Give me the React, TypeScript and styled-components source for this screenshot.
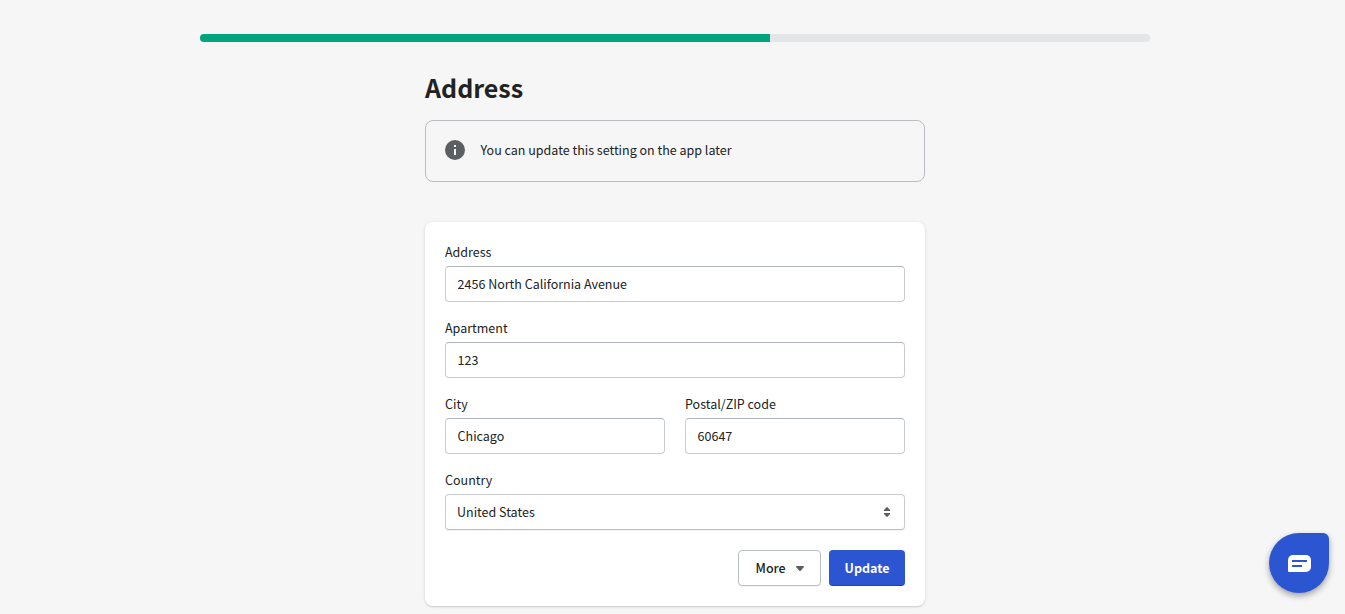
import React, { useState } from "react";
import styled, { createGlobalStyle } from "styled-components";

const GlobalStyle = createGlobalStyle`
  *, *::before, *::after { box-sizing: border-box; }
  body {
    margin: 0;
    overflow: hidden;
    background: #f6f6f6;
    color: #202223;
    font: 400 12.5px/20px "Noto Sans CJK SC", "Noto Sans", sans-serif;
  }
`;

const Page = styled.main`
  height: 614px;
  padding: 34px 0 0 5px;
  display: flex;
  flex-direction: column;
  align-items: center;
`;

const ProgressTrack = styled.div`
  width: 950px;
  height: 8px;
  flex: none;
  border-radius: 4px;
  background: #e4e5e7;
  overflow: hidden;
`;

const ProgressFill = styled.div<{ $value: number }>`
  width: ${(p) => p.$value}%;
  height: 100%;
  background: #00a47c;
`;

const Column = styled.div`
  width: 500px;
  display: flex;
  flex-direction: column;
`;

const Title = styled.h1`
  margin: 29px 0 0;
  height: 49px;
  font-size: 25px;
  font-weight: 700;
  line-height: 32px;
`;

const Banner = styled.div`
  height: 62px;
  padding: 0 19px 2px;
  display: flex;
  align-items: center;
  gap: 15.5px;
  border: 1px solid #babec3;
  border-radius: 8px;
`;

const Icon = styled.svg`
  width: 20px;
  height: 20px;
  flex: none;
  display: block;
  fill: #5c5f62;
`;

const Card = styled.form`
  margin: 40px 0 0;
  height: 384px;
  padding: 20px;
  display: flex;
  flex-direction: column;
  gap: 16px;
  border-radius: 8px;
  background: #fff;
  box-shadow: 0 0 5px rgba(23, 24, 24, 0.05), 0 1px 2px rgba(0, 0, 0, 0.15);
`;

const Pair = styled.div`
  display: grid;
  grid-template-columns: 1fr 1fr;
  gap: 20px;
`;

const Field = styled.label`
  display: flex;
  flex-direction: column;
  gap: 4px;
`;

const Input = styled.input`
  width: 100%;
  height: 36px;
  padding: 0 12px 2px 11.6px;
  border: 1px solid #c9cccf;
  border-top-color: #aeb4b9;
  border-radius: 4px;
  background: #fff;
  color: #202223;
  font: inherit;
  outline: none;
`;

const SelectBox = styled.div`
  height: 36px;
  padding: 0 7px 0 11px;
  display: flex;
  align-items: center;
  justify-content: space-between;
  border: 1px solid #c9cccf;
  border-bottom-color: #babfc3;
  border-radius: 4px;
  background: #fff;
  box-shadow: 0 1px 0 rgba(0, 0, 0, 0.05);
`;

const Actions = styled.div`
  margin-top: 4px;
  display: flex;
  justify-content: flex-end;
  gap: 8px;
`;

const Button = styled.button<{ $primary?: boolean }>`
  width: ${(p) => (p.$primary ? 76 : 83)}px;
  height: 36px;
  padding: ${(p) => (p.$primary ? "0" : "0 10px 0 16.5px")};
  display: flex;
  align-items: center;
  justify-content: ${(p) => (p.$primary ? "center" : "space-between")};
  border: ${(p) => (p.$primary ? "0" : "1px solid #babfc3")};
  border-radius: 4px;
  background: ${(p) => (p.$primary ? "#2c55d2" : "#fff")};
  color: ${(p) => (p.$primary ? "#fff" : "#202223")};
  box-shadow: ${(p) =>
    p.$primary ? "inset 0 -1px 0 rgba(0, 0, 0, 0.2)" : "0 1px 0 rgba(0, 0, 0, 0.05)"};
  font: inherit;
  font-weight: ${(p) => (p.$primary ? 700 : 500)};
`;

const ChatLauncher = styled.button`
  position: fixed;
  right: 16px;
  bottom: 21px;
  width: 60px;
  height: 60px;
  padding: 0;
  border: 0;
  border-radius: 30px 6px 30px 30px;
  background: #2c55d2;
  box-shadow: 0 3px 6px rgba(0, 0, 0, 0.35);
`;

const ChatGlyph = styled.svg`
  display: block;
  width: 60px;
  height: 60px;
`;

function TextField({ label, initial }: { label: string; initial: string }) {
  const [value, setValue] = useState(initial);
  return (
    <Field>
      {label}
      <Input value={value} onChange={(e) => setValue(e.target.value)} />
    </Field>
  );
}

export default function App() {
  return (
    <>
      <GlobalStyle />
      <Page>
        <ProgressTrack>
          <ProgressFill $value={60} />
        </ProgressTrack>
        <Column>
          <Title>Address</Title>
          <Banner>
            <Icon viewBox="0 0 20 20">
              <path
                fillRule="evenodd"
                d="M10 20a10 10 0 1 0 0-20 10 10 0 0 0 0 20zM9 9h2v6H9zM9 5h2v2H9z"
              />
            </Icon>
            <span>You can update this setting on the app later</span>
          </Banner>
          <Card onSubmit={(e) => e.preventDefault()}>
            <TextField label="Address" initial="2456 North California Avenue" />
            <TextField label="Apartment" initial="123" />
            <Pair>
              <TextField label="City" initial="Chicago" />
              <TextField label="Postal/ZIP code" initial="60647" />
            </Pair>
            <Field as="div">
              Country
              <SelectBox>
                <span>United States</span>
                <Icon viewBox="0 0 20 20">
                  <path d="M7.4 9h5.2c.5 0 .8-.6.4-1L10.5 5.2a.7.7 0 0 0-1 0L7 8c-.4.4-.1 1 .4 1zm5.2 2H7.4c-.5 0-.8.6-.4 1l2.5 2.8c.3.3.7.3 1 0L13 12c.4-.4.1-1-.4-1z" />
                </Icon>
              </SelectBox>
            </Field>
            <Actions>
              <Button type="button">
                More
                <Icon viewBox="0 0 20 20">
                  <path d="M13.098 8H6.902c-.751 0-1.172.754-.708 1.268L9.292 12.7c.36.399 1.055.399 1.416 0l3.098-3.433C14.27 8.754 13.849 8 13.098 8z" />
                </Icon>
              </Button>
              <Button type="submit" $primary>
                Update
              </Button>
            </Actions>
          </Card>
        </Column>
      </Page>
      <ChatLauncher aria-label="Chat">
        <ChatGlyph viewBox="0 0 60 60">
          <path
            fill="#fff"
            d="M24 22h13a5 5 0 0 1 5 5v7a5 5 0 0 1-5 5H20a1 1 0 0 1-1-1V27a5 5 0 0 1 5-5z"
          />
          <path stroke="#2c55d2" strokeWidth="2" d="M23 28h15M23 33h10" />
        </ChatGlyph>
      </ChatLauncher>
    </>
  );
}
